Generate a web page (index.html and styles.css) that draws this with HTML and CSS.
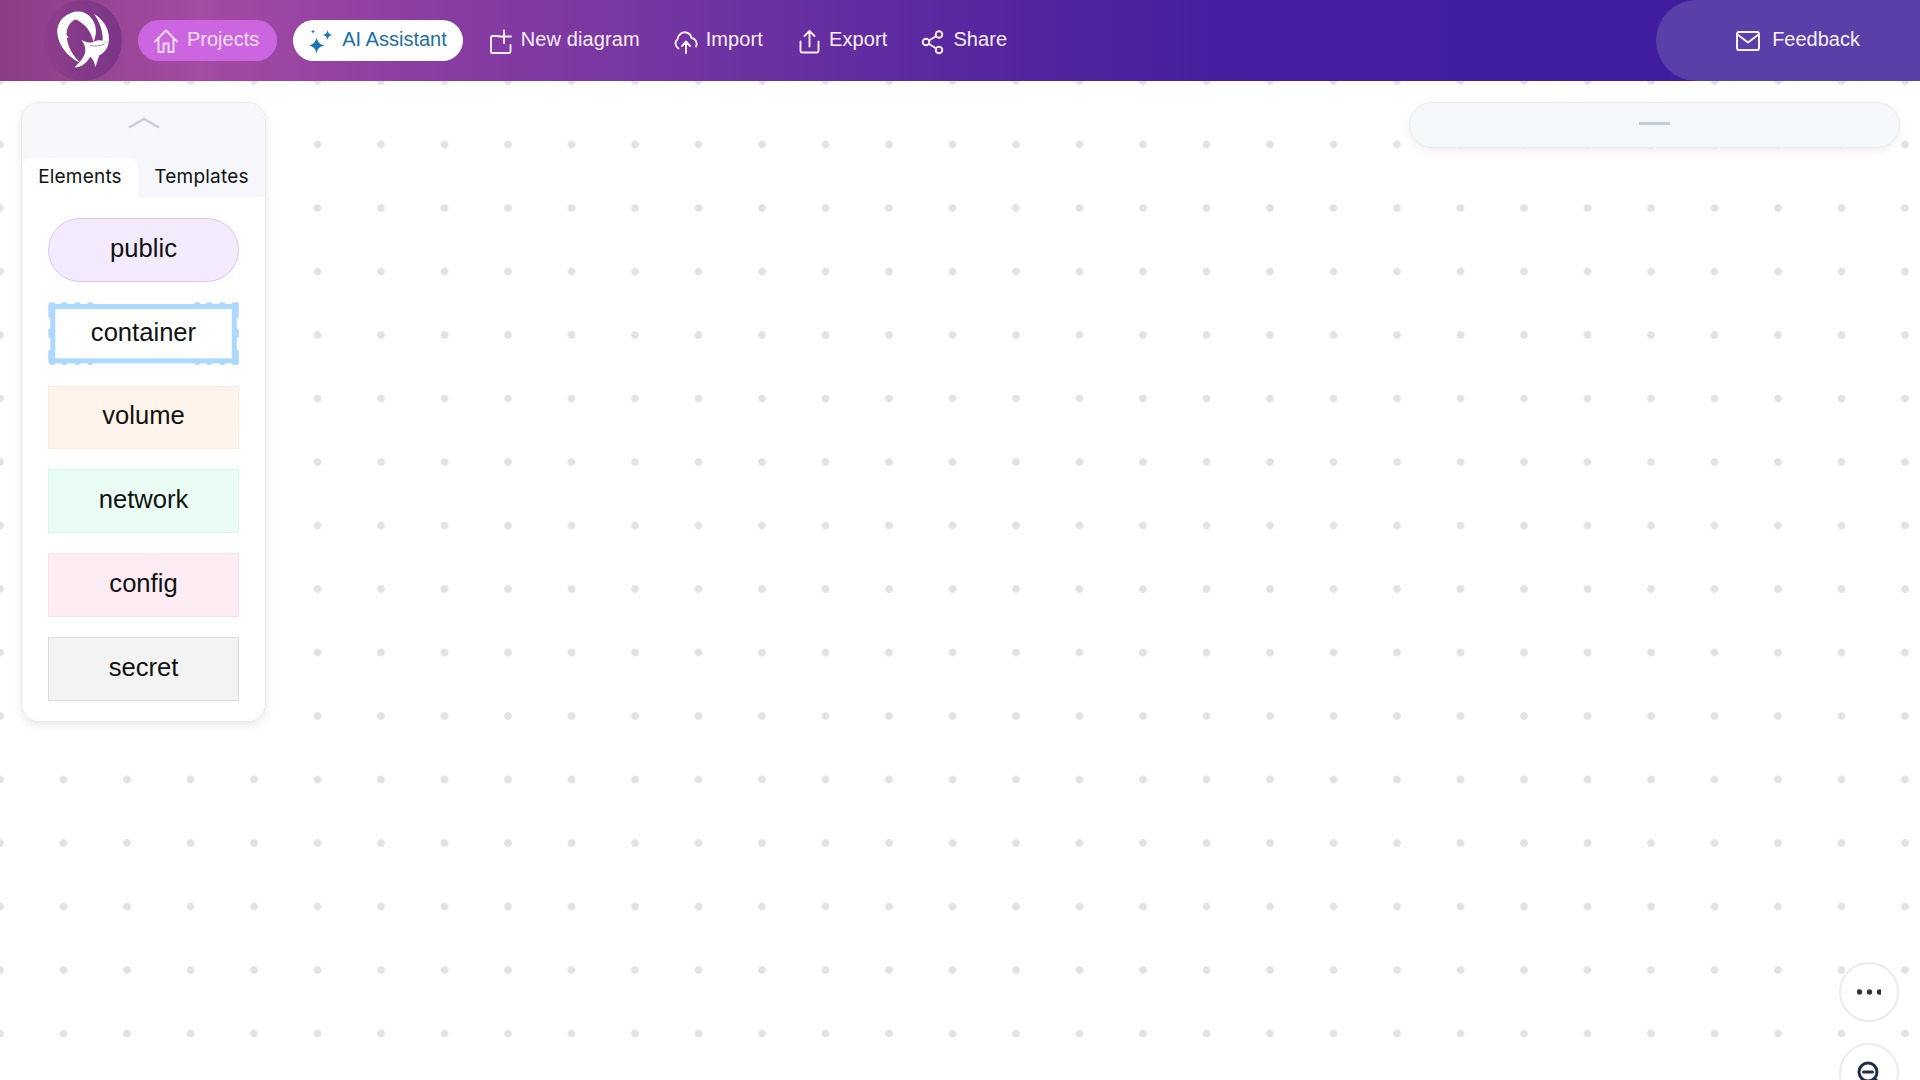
FILE: index.html
```html
<!DOCTYPE html>
<html lang="en">
<head>
<meta charset="utf-8">
<title>Diagram editor</title>
<link rel="stylesheet" href="styles.css">
</head>
<body>
<header class="topbar">
  <a class="logo">
    <svg class="logo-mark" viewBox="-18 -18 234 243" width="78" height="81">
      <path d="M78 20C44 20 20 48 22 80C24 116 50 150 92 172C68 148 52 122 50 90C48 66 58 48 80 38C90 32 88 22 78 20Z"/>
      <path d="M26 66L56 94L36 102Z"/>
      <path d="M46 34C64 12 102 10 122 34C138 54 144 80 130 108C126 84 112 62 94 50C80 40 62 34 46 34Z"/>
      <path d="M132 24C162 40 182 76 176 110L158 104C160 78 150 50 132 24Z"/>
      <path d="M94 102C108 108 120 114 134 106C148 100 162 104 176 112C172 130 160 142 148 148L136 184C134 168 128 158 120 152C112 168 96 184 74 184C92 166 106 150 106 132C106 120 100 110 94 102Z"/>
      <path class="logo-slit" d="M120 118C135 122 150 120 164 114"/>
    </svg>
  </a>
  <a class="pill pill-projects">
    <svg class="icon" viewBox="0 0 24 24"><path d="M1 12.500L12 1.500l11 11M4.500 9V23h5v-8.500h5V23h5V9"/></svg>
    <span>Projects</span>
  </a>
  <a class="pill pill-ai">
    <svg class="icon icon-solid" viewBox="0 0 24 24">
      <path d="M7.500 8.500Q8.500 15 15.500 16.500Q8.500 17.500 7.500 24.500Q6.500 17.500 0 16.500Q6.500 15 7.500 8.500Z"/>
      <path d="M18.500 1Q19 5.500 23.500 6Q19 6.500 18.500 11Q18 6.500 13.500 6Q18 5.500 18.500 1Z"/>
      <path d="M4 .5Q4.300 2.300 6 2.600Q4.300 3 4 4.800Q3.700 3 2 2.600Q3.700 2.300 4 .5Z"/>
    </svg>
    <span>AI Assistant</span>
  </a>
  <nav class="actions">
    <a class="action">
      <svg class="icon" viewBox="0 0 24 24"><path d="M10 7H3.500a1.500 1.500 0 0 0-1.500 1.500V23a1 1 0 0 0 1 1h17a1.500 1.500 0 0 0 1.500-1.500V16M15 1.500V14M9.500 7.500H22"/></svg>
      <span>New diagram</span>
    </a>
    <a class="action">
      <svg class="icon" viewBox="0 0 24 24"><path d="M4.500 19.500C1 17.500.5 12.500 3.500 10.500C4 5.500 8.500 2.500 12 3.500C15 4 17 6 17.500 9C21.500 9.500 24 14 22 17.500M12 24V13M8 17l4-4.500 4 4.500"/></svg>
      <span>Import</span>
    </a>
    <a class="action">
      <svg class="icon" viewBox="0 0 24 24"><path d="M3.500 12.500V22a1.500 1.500 0 0 0 1.500 1.500H20a1.500 1.500 0 0 0 1.500-1.500v-9.500M12.500 17.500V2M7.500 7l5-5 5 5"/></svg>
      <span>Export</span>
    </a>
    <a class="action">
      <svg class="icon" viewBox="0 0 24 24"><circle cx="18" cy="5.500" r="3.300"/><circle cx="5" cy="13" r="3.300"/><circle cx="18" cy="21" r="3.300"/><path d="M8 11.500l7-4.300M8 15l7 4.300"/></svg>
      <span>Share</span>
    </a>
  </nav>
  <a class="feedback">
    <svg class="icon icon-mail" viewBox="0 0 24 24"><rect x="1" y="3" width="22" height="18" rx="2"/><path d="M1.500 5.500L12 13.500l10.500-8"/></svg>
    <span>Feedback</span>
  </a>
</header>

<main class="canvas">
  <aside class="palette">
    <div class="palette-head">
      <svg class="chevron" viewBox="0 0 32 12" width="32" height="12"><path d="M1 10.500L16 2l15 8.500"/></svg>
      <div class="tabs">
        <button class="tab tab-active">Elements</button>
        <button class="tab">Templates</button>
      </div>
    </div>
    <div class="palette-body">
      <div class="element el-public">public</div>
      <div class="element el-container">
        <svg class="bumps" viewBox="0 0 191 64" preserveAspectRatio="none">
          <rect class="band" x="4.800" y="4.500" width="181.500" height="54.500"/>
          <path class="bump" d="M3.500 2.800h1.500M15.500 2.800h1.500M28.500 2.800h1.500M41.500 2.800h1.500M148.500 2.800h1.500M160.500 2.800h1.500M173.500 2.800h1.500M186 2.800h2.500M3.500 60.800h1.500M15.500 60.800h1.500M28.500 60.800h1.500M41.500 60.800h1.500M148.500 60.800h1.500M160.500 60.800h1.500M173.500 60.800h1.500M186 60.800h2.500M2.800 3v11M2.800 29v5M2.800 50v10M188.300 3v11M188.300 29v5M188.300 50v10"/>
        </svg>
        <span class="el-label">container</span>
      </div>
      <div class="element el-volume">volume</div>
      <div class="element el-network">network</div>
      <div class="element el-config">config</div>
      <div class="element el-secret">secret</div>
    </div>
  </aside>
  <aside class="inspector"><span class="inspector-dash"></span></aside>
  <div class="floating">
    <button class="round-btn">
      <svg viewBox="0 0 24 24" width="24" height="24"><circle class="dot" cx="2.500" cy="12" r="2.700"/><circle class="dot" cx="12.500" cy="12" r="2.700"/><circle class="dot" cx="22.500" cy="12" r="2.700"/></svg>
    </button>
    <button class="round-btn">
      <svg class="zoom-icon" viewBox="0 0 24 24" width="24" height="24"><circle cx="11" cy="11" r="9"/><path d="M6.500 11h9M18 18l4 4"/></svg>
    </button>
  </div>
</main>
</body>
</html>
```
FILE: styles.css
```css
* { box-sizing: border-box; }
html, body { margin: 0; height: 100%; overflow: hidden; }
body {
  display: flex;
  flex-direction: column;
  font-family: "Liberation Sans", Arial, sans-serif;
  background: #fff;
}
a { color: inherit; text-decoration: none; }
button { font: inherit; border: 0; background: none; padding: 0; color: inherit; }

.topbar {
  flex: none;
  height: 81px;
  display: flex;
  align-items: center;
  padding-left: 44px;
  color: #fff;
  font-size: 20px;
  background: linear-gradient(90deg, #8b3d86 0, #a44ba2 200px, #8b3da3 420px, #7636a1 640px, #5426a0 1000px, #431ea0 1250px, #3f1c9f 1920px);
}
.logo {
  flex: none;
  width: 78px;
  height: 81px;
  border-radius: 50%;
  background: linear-gradient(90deg, #8d3e8b, #7b3587);
  margin-right: 16px;
}
.logo-mark { display: block; }
.logo-mark path { fill: #fff; }
.logo-mark .logo-slit { fill: none; stroke: #8a3d94; stroke-width: 2; }

.icon {
  flex: none;
  width: 24px;
  height: 24px;
  fill: none;
  stroke: currentColor;
  stroke-width: 1.900;
  stroke-linecap: round;
  stroke-linejoin: round;
  overflow: visible;
}
.icon-solid { fill: #1a77b4; stroke: none; }
.icon-mail { stroke-width: 2; }

.pill {
  flex: none;
  height: 41px;
  display: flex;
  align-items: center;
  gap: 9px;
  padding: 0 16px;
  border-radius: 21px;
  line-height: 36px;
}
.pill span, .action span, .feedback span { margin-top: -3px; }
.pill-projects { background: #cc66e0; color: #f6dffa; margin-right: 16px; padding-right: 18px; }
.pill-ai { background: #fff; color: #1b6fa8; }

.actions { display: flex; align-items: center; gap: 34px; margin-left: 26px; }
.action { display: flex; align-items: center; gap: 8px; color: #f7effb; letter-spacing: .1px; }

.feedback {
  margin-left: auto;
  width: 264px;
  height: 81px;
  display: flex;
  align-items: center;
  justify-content: flex-end;
  gap: 12px;
  padding-right: 60px;
  background: #5b3fa9;
  border-radius: 42px 0 0 42px;
  color: #f5f0fb;
}

.canvas {
  flex: 1;
  position: relative;
  display: flex;
  justify-content: space-between;
  align-items: flex-start;
  padding: 21px 20px 0 21px;
  background-image: radial-gradient(circle at center, #e2e2e2 0, #e2e2e2 3.400px, transparent 4.300px);
  background-size: 63.500px 63.500px;
  background-position: -31.750px -95.250px;
}

.palette {
  flex: none;
  width: 245px;
  height: 620px;
  border-radius: 18px;
  background: #fff;
  border: 1px solid #e9e9e9;
  box-shadow: 0 3px 10px rgba(0, 0, 0, .09);
  overflow: hidden;
}
.palette-head { height: 94px; background: #f5f7fb; display: flex; flex-direction: column; align-items: center; }
.chevron { margin-top: 14px; fill: none; stroke: #c5d0da; stroke-width: 2.500; }
.tabs { margin-top: auto; width: 100%; height: 39px; display: flex; }
.tab {
  height: 39px;
  padding-bottom: 3px;
  font-family: "Inter", sans-serif;
  font-size: 19px;
  letter-spacing: .2px;
  color: #111;
  text-align: center;
}
.tab:nth-child(1) { width: 116px; }
.tab:nth-child(2) { flex: 1; }
.tab-active { background: #fff; border-radius: 10px 10px 0 0; }

.palette-body {
  display: flex;
  flex-direction: column;
  gap: 20px;
  padding: 21px 26px 0 26px;
}
.element {
  position: relative;
  height: 63.800px;
  display: flex;
  align-items: center;
  justify-content: center;
  padding-bottom: 3px;
  border: 1px solid;
  font-size: 25.600px;
  color: #111;
}
.el-public { background: #f3ebfd; border-color: #dfc3ec; border-radius: 32px; }
.el-container { border: 0; background: #fff; }
.el-label { position: relative; }
.bumps { position: absolute; inset: 0; width: 100%; height: 100%; }
.band { fill: #fff; stroke: #add8ff; stroke-width: 5px; }
.bump { fill: none; stroke: #add8ff; stroke-width: 5px; stroke-linecap: round; }
.el-volume { background: #fef4eb; border-color: #fcebdd; }
.el-network { background: #eafdf4; border-color: #d9f8ea; }
.el-config { background: #feecf4; border-color: #f8dfec; }
.el-secret { background: #f3f3f3; border-color: #dcdcdc; }

.inspector {
  flex: none;
  width: 491px;
  height: 46px;
  display: flex;
  justify-content: center;
  padding-top: 19px;
  background: #f5f8fb;
  border: 1px solid #e9ecef;
  border-radius: 23px;
  box-shadow: 0 3px 10px rgba(0, 0, 0, .07);
}
.inspector-dash { width: 31px; height: 3px; background: #c0cdd8; }

.floating {
  position: absolute;
  top: 881px;
  right: 21px;
  display: flex;
  flex-direction: column;
  gap: 21px;
}
.round-btn {
  width: 60px;
  height: 60px;
  border: 2px solid #ebebeb;
  border-radius: 50%;
  background: #fff;
  display: flex;
  align-items: center;
  justify-content: center;
}
.dot { fill: #333; }
.zoom-icon { fill: none; stroke: #1f2d4d; stroke-width: 3; stroke-linecap: round; }
```
